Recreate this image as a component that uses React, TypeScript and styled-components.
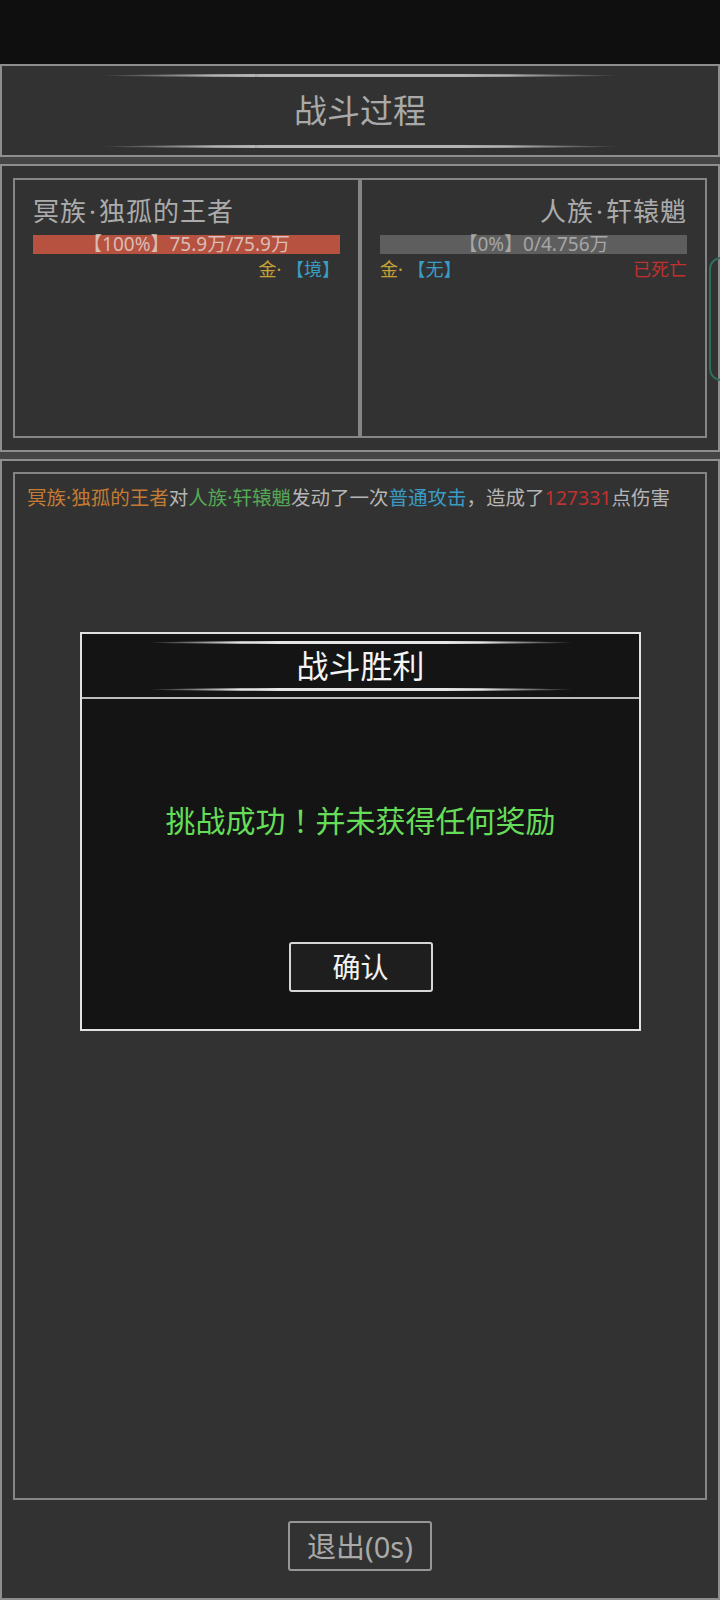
import styled, { createGlobalStyle } from 'styled-components';

const GlobalStyle = createGlobalStyle`
  html, body {
    margin: 0;
    padding: 0;
    background: #0f0f0f;
  }
  body {
    font-family: 'Noto Sans', 'Noto Sans CJK SC', sans-serif;
  }
  * {
    box-sizing: border-box;
  }
`;

const StatusBar = styled.div`
  height: 64px;
  background: #0f0f0f;
`;

const Screen = styled.div`
  position: relative;
  display: flex;
  flex-direction: column;
  gap: 7px;
  height: 1536px;
  background: #454545;
`;

const Panel = styled.section<{ $h: number }>`
  height: ${(p) => p.$h}px;
  background: #323232;
  border: 2px solid #8e8e8e;
  display: flex;
  flex-direction: column;
`;

const HeaderPanel = styled(Panel)`
  align-items: center;
  padding-top: 8px;
`;

const Deco = styled.div<{ $w: number; $c: string }>`
  width: ${(p) => p.$w}px;
  height: 3px;
  border-radius: 50%;
  background: linear-gradient(
    90deg,
    transparent 0%,
    ${(p) => p.$c} 22%,
    ${(p) => p.$c} 78%,
    transparent 100%
  );
`;

const PageTitle = styled.h1`
  margin: 0;
  height: 68px;
  line-height: 68px;
  font-size: 33px;
  font-weight: 400;
  color: #a9a9a9;
`;

const FightersRow = styled(Panel)`
  flex-direction: row;
  padding: 12px 11px;
`;

const Card = styled.div<{ $right?: boolean }>`
  flex: 1;
  height: 260px;
  border: 2px solid #858585;
  padding: 14px 18px 0;
  display: flex;
  flex-direction: column;
  align-items: ${(p) => (p.$right ? 'flex-end' : 'flex-start')};
`;

const Name = styled.div`
  font-size: 26px;
  letter-spacing: 1px;
  line-height: 34px;
  color: #ababab;
`;

const Dot = styled.span`
  margin: 0 2px;
`;

const HpBar = styled.div<{ $fill: string; $text: string }>`
  width: 100%;
  height: 19px;
  margin-top: 7px;
  background: ${(p) => p.$fill};
  color: ${(p) => p.$text};
  font-size: 19px;
  line-height: 19px;
  text-align: center;
  white-space: nowrap;
`;

const InfoRow = styled.div<{ $end?: boolean }>`
  width: 100%;
  margin-top: 1px;
  display: flex;
  justify-content: ${(p) => (p.$end ? 'flex-end' : 'space-between')};
  font-size: 18px;
  line-height: 28px;
`;

const Tone = styled.span<{ $c: string }>`
  color: ${(p) => p.$c};
`;

const LogPanel = styled(Panel)`
  flex: 1;
  padding: 11px 11px 0;
  align-items: center;
`;

const LogBox = styled.div`
  width: 100%;
  height: 1028px;
  border: 2px solid #858585;
  padding: 10px 12px;
`;

const LogLine = styled.p`
  margin: 0;
  font-size: 19.5px;
  line-height: 28px;
  color: #b5b5b5;
  white-space: nowrap;
`;

const Button = styled.button<{ $dark?: boolean }>`
  width: 144px;
  height: 50px;
  border-radius: 3px;
  border: 2px solid ${(p) => (p.$dark ? '#d6d6d6' : '#969696')};
  background: ${(p) => (p.$dark ? '#1e1e1e' : '#323232')};
  color: ${(p) => (p.$dark ? '#f2f2f2' : '#a9a9a9')};
  font-family: inherit;
  font-size: ${(p) => (p.$dark ? 28 : 29)}px;
  line-height: 1;
  padding: 0;
`;

const ExitButton = styled(Button)`
  margin-top: 21px;
`;

const SideTab = styled.div`
  position: absolute;
  top: 193px;
  left: 709px;
  width: 24px;
  height: 124px;
  border: 2px solid #2f6d5f;
  border-radius: 12px;
`;

const Modal = styled.div`
  position: absolute;
  top: 568px;
  left: 80px;
  width: 561px;
  height: 399px;
  background: #141414;
  border: 2px solid #e2e2e2;
  display: flex;
  flex-direction: column;
`;

const ModalHead = styled.div`
  height: 65px;
  padding-top: 7px;
  border-bottom: 2px solid #bdbdbd;
  display: flex;
  flex-direction: column;
  align-items: center;
`;

const ModalTitle = styled.h2`
  margin: 0;
  height: 44px;
  line-height: 44px;
  font-size: 32px;
  font-weight: 400;
  color: #f4f4f4;
`;

const ModalBody = styled.div`
  flex: 1;
  display: flex;
  flex-direction: column;
  align-items: center;
  padding-top: 100px;
  gap: 101px;
`;

const Result = styled.p`
  margin: 0;
  font-size: 30px;
  line-height: 40px;
  color: #66dd58;
`;

const FullWidthMark = styled.span`
  font-family: 'Noto Sans CJK JP', 'Noto Sans CJK SC', sans-serif;
`;

export default function App() {
  return (
    <>
      <GlobalStyle />
      <StatusBar />
      <Screen>
        <HeaderPanel $h={93}>
          <Deco $w={522} $c="#b4b4b4" />
          <PageTitle>战斗过程</PageTitle>
          <Deco $w={522} $c="#b4b4b4" />
        </HeaderPanel>

        <FightersRow $h={288}>
          <Card>
            <Name>
              冥族<Dot>·</Dot>独孤的王者
            </Name>
            <HpBar $fill="#b6523f" $text="#d9bdb6">【100%】75.9万/75.9万</HpBar>
            <InfoRow $end>
              <span>
                <Tone $c="#c9a234">金· </Tone>
                <Tone $c="#3a9cc4">【境】</Tone>
              </span>
            </InfoRow>
          </Card>
          <Card $right>
            <Name>
              人族<Dot>·</Dot>轩辕魈
            </Name>
            <HpBar $fill="#5e5e5e" $text="#a6a6a6">【0%】0/4.756万</HpBar>
            <InfoRow>
              <span>
                <Tone $c="#c9a234">金· </Tone>
                <Tone $c="#3a9cc4">【无】</Tone>
              </span>
              <Tone $c="#c0312f">已死亡</Tone>
            </InfoRow>
          </Card>
        </FightersRow>

        <LogPanel $h={1141}>
          <LogBox>
            <LogLine>
              <Tone $c="#c47b33">冥族·独孤的王者</Tone>对
              <Tone $c="#55a955">人族·轩辕魈</Tone>发动了一次
              <Tone $c="#3a9cc4">普通攻击</Tone>，造成了
              <Tone $c="#c0312f">127331</Tone>点伤害
            </LogLine>
          </LogBox>
          <ExitButton>退出(0s)</ExitButton>
        </LogPanel>

        <SideTab />

        <Modal>
          <ModalHead>
            <Deco $w={428} $c="#e6e6e6" />
            <ModalTitle>战斗胜利</ModalTitle>
            <Deco $w={428} $c="#e6e6e6" />
          </ModalHead>
          <ModalBody>
            <Result>
              挑战成功<FullWidthMark>！</FullWidthMark>并未获得任何奖励
            </Result>
            <Button $dark>确认</Button>
          </ModalBody>
        </Modal>
      </Screen>
    </>
  );
}
